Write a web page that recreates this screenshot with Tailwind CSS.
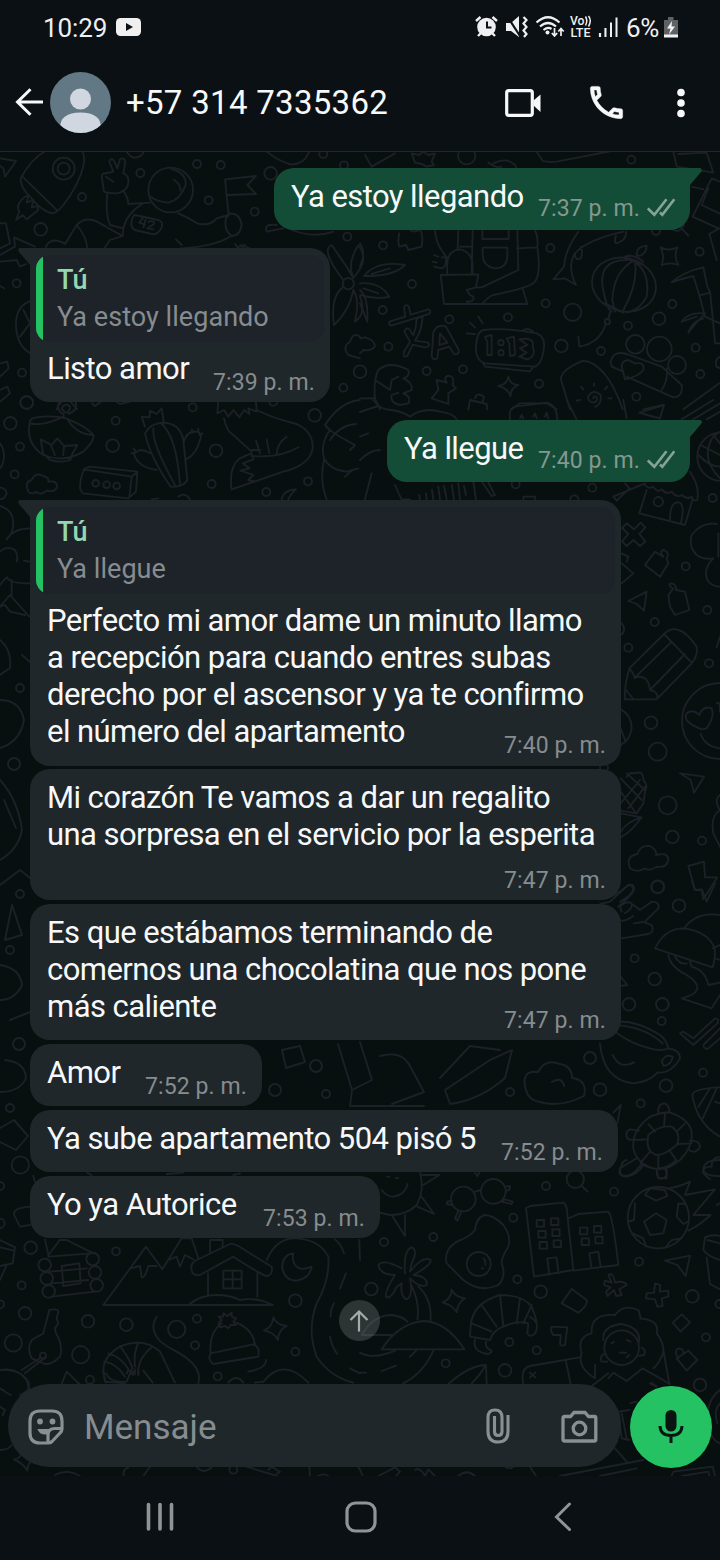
<!DOCTYPE html>
<html lang="es">
<head>
<meta charset="utf-8">
<title>Chat</title>
<script src="https://cdn.jsdelivr.net/npm/@tailwindcss/browser@4"></script>
</head>
<body class="bg-[#0b1014]">
<div class="relative isolate flex h-[1560px] w-[720px] flex-col overflow-hidden bg-[#07100f] font-['Roboto',sans-serif] text-[#f7f8fa]">

<!-- doodle wallpaper -->
<svg class="absolute inset-0 -z-10" width="720" height="1560" viewBox="0 0 720 1560" fill="none" stroke="#1e2028" stroke-width="5.5" stroke-linecap="round" stroke-linejoin="round">
<g transform="translate(0 150) scale(.33333)">
<path d="M0 25L48 33L15 80L10 55L0 48M62 85Q90 30 140 0M62 85Q60 110 90 140Q120 180 155 190Q170 190 190 165Q240 100 252 40Q255 15 245 0M70 82L172 182M75 140Q45 165 58 185L48 210L68 195L80 208L115 180L112 168L95 172L100 150L80 158L85 138Z"/>
<circle cx="191" cy="56" r="33"/><circle cx="191" cy="56" r="18"/>
<path d="M312 125L306 85Q303 68 318 70L340 65L328 35Q332 22 342 32L352 55L360 28Q372 20 376 35L370 70Q388 75 385 100Q380 125 350 130Q325 130 312 125ZM318 80L340 95M322 130Q315 190 330 225L370 235M372 125Q385 145 385 162L450 158M370 235Q380 190 430 160M370 235L368 258L300 220Q260 195 230 225L195 282Q160 260 140 285L135 300M230 225Q260 260 262 295M368 258L330 270L310 300"/>
<circle cx="512" cy="120" r="67"/><path d="M515 57Q560 70 557 105Q540 150 505 158Q470 155 452 140M522 90Q540 100 542 122M535 190Q570 205 590 220Q630 230 650 205L685 195M675 88L768 78L742 105L768 132L682 135M675 88L686 195M690 190Q720 190 725 225Q720 258 695 258Q670 240 678 205ZM690 260Q640 290 540 295M528 268L545 285M405 195L475 210Q490 215 485 232Q475 255 455 252L405 240Q390 232 395 215Q398 195 405 195ZM432 200L418 218L435 224M437 208L430 232M445 215Q465 210 462 222L442 235L460 238M380 5Q400 35 425 15L435 0M800 5Q830 30 870 43Q910 45 925 10L930 0M800 245Q790 220 830 225M800 245L850 235M850 228Q930 270 1000 245"/>
<circle cx="421" cy="69" r="12"/><circle cx="591" cy="42" r="12"/><circle cx="662" cy="45" r="12"/><circle cx="626" cy="151" r="12"/><circle cx="764" cy="185" r="12"/><circle cx="812" cy="70" r="19"/><circle cx="246" cy="141" r="12"/><circle cx="122" cy="238" r="19"/><circle cx="970" cy="12" r="12"/><circle cx="1032" cy="46" r="12"/><circle cx="1042" cy="260" r="12"/><circle cx="50" cy="400" r="12"/><circle cx="66" cy="668" r="12"/><circle cx="1030" cy="713" r="12"/><circle cx="80" cy="757" r="19"/>
<path d="M0 220L18 220L30 280L0 295M0 315L45 290L42 262L105 290M0 335L50 330L60 350L78 342M105 450Q45 460 48 530Q52 590 92 610M70 480L90 520L60 560M0 640L22 635L26 655L0 680M0 720L22 710L30 730L0 755M0 408L12 415M170 778Q180 750 205 748L232 778M700 302L725 285L765 302M705 282L720 300L735 285"/>
<path d="M1030 390Q960 300 995 285L1040 350L1060 384M1060 384Q1040 340 1075 285Q1110 330 1060 384M1030 410Q990 440 1002 525Q1050 480 1060 420M1060 420Q1080 450 1065 515Q1100 490 1080 440"/><circle cx="1045" cy="401" r="17"/>
<path d="M1080 560Q1060 545 1050 575Q1025 590 1045 615L1080 625"/>
</g>
<g transform="translate(360 150) scale(.33333)">
<path d="M15 15L35 50L105 10M155 10L178 15L190 5L205 15L225 10L215 35L222 45L200 50L185 42L165 38ZM385 38Q410 55 425 50M400 40Q440 20 465 45L468 52M530 5L548 32Q560 38 590 35L770 0M950 50L940 5M950 50L1060 68M955 12L1040 8L1060 68M1055 85L1080 95M1055 85L998 200L1075 235M1045 115L1025 165L1078 190M995 110L1030 118M1048 252L1078 235M1048 252L1070 330"/>
<circle cx="320" cy="17" r="26"/><circle cx="814" cy="29" r="12"/>
<path d="M118 250Q112 275 118 290L138 285L145 300L185 290Q190 260 182 240L160 245L150 240M225 240Q225 280 260 322L262 370M295 240L293 300M262 345Q262 300 300 298Q335 305 338 345L338 370M242 375L355 373L348 412L320 420L330 435L340 440Q345 455 320 455L328 462L252 462ZM235 320L222 315M245 322L258 322Q260 350 245 355L222 350M218 335L230 338M338 240L335 370M300 290L335 290M367 240V267H446V240M368 293H442V315Q442 355 405 355Q370 350 368 315ZM472 240L475 360L365 412L345 412M472 295L532 292Q535 260 525 240M532 292Q545 380 520 400Q500 415 400 435Q385 440 368 460M488 415L502 462H328"/>
<path d="M0 350L10 320M0 280Q15 300 5 345M12 378Q50 330 135 345Q100 380 12 378ZM35 372L90 355M0 400Q60 395 88 440Q50 450 0 435M0 420Q25 440 22 515L0 460M10 415L55 430"/>
<path d="M655 245Q615 300 612 350L580 388L615 385L648 405Q620 350 645 310Q680 270 790 245M645 310Q645 335 662 325Q670 305 662 290M770 250Q760 280 770 280Q800 270 798 245"/>
<ellipse cx="792" cy="404" rx="97" ry="80" transform="rotate(15 792 404)"/><path d="M800 330Q720 330 727 405Q740 480 755 485M815 335Q760 370 757 450L765 485M825 335Q835 400 790 480M830 340Q870 370 860 440Q840 480 800 488M795 325L850 345M735 460L790 488M795 320Q820 310 850 335M830 315Q828 290 860 287Q860 310 838 318ZM750 488L745 505M655 560L658 590Q720 580 738 520"/><circle cx="742" cy="515" r="8"/>
<path d="M902 292Q925 305 952 292Q940 318 955 345Q930 335 905 345Q915 320 902 292ZM935 397Q970 365 1030 352L1042 410L1050 425L1058 500L1065 580L1080 580M935 397Q970 385 1000 378L1018 436L1050 428M1018 436L1035 500L1080 520M965 515Q985 485 1035 490Q1010 515 985 548Q995 515 1030 505M965 515L1010 500"/>
<path d="M88 515Q85 525 94 527L208 492Q215 480 205 478L152 494L146 468Q135 462 132 472L136 500ZM170 505L188 500Q185 545 165 572L205 578Q212 590 195 592L158 584L142 618Q128 625 132 605L150 575L133 545Q138 530 148 538L160 556Q170 530 170 505ZM215 620L220 545Q235 520 258 530L296 600Q298 615 282 612L268 590L235 600L232 625Q220 632 215 620ZM238 585L240 550L262 578ZM320 550L345 552M330 518L345 532M355 500L368 520"/>
<path d="M370 540Q440 532 530 550Q555 560 552 590Q548 640 525 650L375 640Q345 630 348 590Q350 545 370 540ZM370 640L375 650L510 664L520 650M488 542Q505 530 522 548M375 560L395 555L395 615L382 615L382 575ZM440 565L462 560L465 615L450 618L448 580ZM478 568Q525 560 518 590Q530 620 500 628L478 620L500 608L480 595L502 585Z"/><circle cx="423" cy="578" r="8"/><circle cx="423" cy="608" r="8"/>
<path d="M415 708Q440 705 445 680Q450 705 475 705Q450 715 452 738Q440 712 415 708ZM230 690L260 698Q250 685 262 678Q285 675 278 705L288 715L265 730L265 762L215 745L235 720ZM45 745Q40 690 55 660Q90 630 145 660Q150 680 130 685Q160 700 155 720L130 730Q155 740 145 760L120 765Q90 760 95 735L115 728M45 690L90 720L95 690L115 680M0 745L45 745L60 778"/>
<path d="M325 778L330 750L380 762L382 778M345 745Q350 725 372 740L368 755M455 778L480 760L560 760L590 778M670 632Q600 660 603 690L630 778M670 632Q740 640 788 778M700 745Q700 735 710 742Q715 755 700 758Q682 755 685 738Q700 715 722 735Q725 765 705 770M702 708V700M735 718L742 710M745 745L755 745M670 718L663 710M660 750L650 752"/>
<circle cx="826" cy="583" r="28"/><circle cx="898" cy="597" r="37"/><circle cx="951" cy="645" r="27"/><path d="M800 612Q760 600 752 635L755 650L790 665M800 612L905 650L965 705Q970 740 940 742L800 680M920 655Q925 690 905 720M795 688L785 650Q785 632 805 630L825 640Q855 635 850 660Q835 680 795 688ZM850 778L910 765M970 778L1078 700"/>
<circle cx="69" cy="286" r="12"/><circle cx="156" cy="402" r="12"/><circle cx="68" cy="480" r="12"/><circle cx="268" cy="508" r="12"/><circle cx="444" cy="502" r="12"/><circle cx="557" cy="460" r="12"/><circle cx="571" cy="294" r="12"/><circle cx="638" cy="487" r="26"/><circle cx="604" cy="588" r="19"/><circle cx="723" cy="603" r="12"/><circle cx="804" cy="527" r="12"/><circle cx="897" cy="506" r="19"/><circle cx="937" cy="462" r="12"/><circle cx="1019" cy="305" r="12"/><circle cx="1007" cy="593" r="12"/><circle cx="1021" cy="672" r="12"/><circle cx="829" cy="740" r="12"/><circle cx="537" cy="701" r="12"/><circle cx="309" cy="658" r="12"/><circle cx="200" cy="663" r="12"/><circle cx="85" cy="590" r="12"/><circle cx="0" cy="665" r="19"/><circle cx="888" cy="243" r="12"/>
<path d="M0 565L15 562Q45 570 45 590Q30 605 10 600L0 610M960 230L985 257M940 240Q960 250 972 225M1080 620Q1062 630 1070 650L1080 655"/>
</g>
<g transform="translate(0 400) scale(.33333)">
<path d="M90 65Q75 130 130 165Q190 190 250 155Q285 120 280 105Q230 105 200 55Q150 45 110 52Q90 55 90 65ZM90 70Q130 80 190 50M205 58Q260 80 280 105M180 0Q165 30 190 42L192 55M225 0Q238 30 205 42M185 25Q195 5 210 20Q210 38 195 38ZM130 165L122 118L155 135L172 115L192 138L232 135L215 165M135 165L150 180Q185 190 210 180L218 165M165 165L152 135M190 165L192 138"/>
<path d="M435 80L425 50L448 52L450 32L470 42L485 25L492 72M435 100Q450 70 490 68Q540 70 550 120L562 240Q550 262 512 260Q450 170 435 100ZM460 85Q455 130 525 255M485 72Q530 110 540 255M470 210Q410 200 402 160L420 150Q435 150 450 160M395 160L405 158M400 145L408 155M550 130Q560 90 590 95Q610 100 600 120Q590 160 560 178M575 88L580 98M595 86V96M608 100L598 105"/>
<path d="M240 265Q240 230 255 205L270 200L412 215L408 275L385 295L248 280ZM250 208L395 230L412 216M395 230L388 293"/><circle cx="287" cy="250" r="10"/><circle cx="320" cy="254" r="10"/><circle cx="350" cy="258" r="10"/>
<path d="M85 275Q72 245 95 240Q105 215 130 228Q148 232 145 245Q170 240 172 260Q165 278 140 272Q120 288 110 275Q95 285 85 275Z"/>
<path d="M275 10L285 18L310 0M340 0L360 12L390 5M655 0L652 40L672 30L685 50L700 30L718 52L732 30L748 42L745 25L770 35L768 5M770 30Q820 55 890 72Q940 95 938 145Q930 195 850 215L695 268Q685 200 720 175Q740 165 755 160M672 55Q680 95 700 105L755 155M755 150L780 150M755 168Q840 175 895 142M768 122L780 160M800 118L808 160M860 110Q830 130 830 165M755 165L760 178L728 190L748 205L722 212L760 225L745 240L765 245M1080 0Q1020 5 975 75Q980 90 1065 135L1050 150M975 75L990 90Q960 130 972 175Q990 210 1040 215L1075 205M972 180Q958 240 980 298M1035 230L1055 212M845 298Q850 270 888 268Q870 285 865 298M0 130Q12 145 12 170Q10 195 0 205M455 298L475 295M535 290Q555 275 570 298M0 262Q18 265 20 280Q15 298 0 298M0 318Q40 330 40 370Q40 400 20 418Q40 385 90 385M0 455Q20 435 45 450Q55 465 50 485M72 482L88 485M0 555Q10 540 22 532Q25 550 90 550M35 540V585M0 620L30 585L88 650M0 620L15 615L30 635L75 645"/>
<circle cx="80" cy="8" r="19"/><circle cx="31" cy="70" r="19"/><circle cx="60" cy="140" r="12"/><circle cx="44" cy="223" r="12"/><circle cx="338" cy="137" r="19"/><circle cx="347" cy="62" r="12"/><circle cx="578" cy="22" r="12"/><circle cx="648" cy="152" r="19"/><circle cx="635" cy="252" r="12"/><circle cx="799" cy="276" r="12"/><circle cx="924" cy="244" r="12"/><circle cx="944" cy="46" r="19"/><circle cx="820" cy="5" r="12"/>
</g>
<g transform="translate(360 400) scale(.33333)">
<path d="M40 0Q60 30 95 30Q130 35 150 50Q190 20 240 35Q280 40 290 58M0 110L25 100M0 180Q30 150 60 150M35 220L15 298M105 255Q115 280 125 298L150 298M180 298L178 285M200 298L198 280M220 298L216 270M240 298L235 260M260 298L252 258M282 298L275 255M300 298L295 250M318 285L312 258M340 245L348 298M368 248L395 288L405 285L385 248M855 250L760 290L770 302L808 265L795 250M450 58Q445 25 465 20L560 8Q590 15 592 58M480 55L485 45L490 55M520 50L525 40L530 55M555 50L560 38L565 55M620 0L650 58M790 0L800 55M838 38L912 15L900 55L872 48ZM965 58L1060 0M1000 58L1080 10M1040 58L1080 35"/>
<circle cx="1085" cy="170" r="73"/><path d="M1080 95Q1050 110 1045 145Q1035 190 1080 235M1015 165Q1050 200 1080 200M1022 135L1080 165M1060 105L1080 130"/>
<path d="M990 215Q1020 260 1012 300Q1000 305 995 290Q980 300 965 285Q950 295 935 275Q920 285 905 268Q890 280 880 260Q868 270 852 252M860 270L838 340L975 375L997 300M930 360Q930 300 960 308Q975 320 962 372"/><circle cx="895" cy="305" r="14"/>
<path d="M800 370L822 388L842 368L856 382L838 402L856 425L840 438L820 420L800 438L786 424L805 402L786 384ZM785 460L805 470L800 485M785 490L820 520L785 550M885 455L910 470Q895 455 912 450Q930 458 920 475L925 490L900 530L855 495ZM925 585L940 565Q925 560 930 550Q950 550 948 570L975 575L988 630L945 645L930 620ZM805 603L860 575L852 632L830 612Z"/>
<path d="M1070 372Q1025 365 995 405Q985 440 1010 465Q1030 480 1060 475Q1025 510 1045 545Q1060 560 1080 560M1075 400V470"/>
<circle cx="697" cy="263" r="12"/><circle cx="1058" cy="294" r="12"/><circle cx="977" cy="499" r="12"/><circle cx="467" cy="253" r="12"/><circle cx="643" cy="298" r="12"/><path d="M490 298V290H525V298"/>
</g>
<g transform="translate(600 600) scale(.33333)">
<path d="M192 102L88 205Q72 260 75 298H170L275 190Q295 165 290 140Q260 95 230 88Q210 85 192 102ZM192 102L275 188M212 128L105 232Q145 222 150 270L255 162M88 205Q98 215 105 235M150 270Q175 275 172 295M78 270L100 297"/>
<circle cx="360" cy="363" r="114"/><path d="M305 388Q245 365 260 340Q280 325 298 345Q310 315 335 325Q345 350 320 385ZM302 402Q315 440 360 445M350 310Q360 300 360 335M62 328Q95 345 95 385Q90 420 62 435M62 385L75 420M80 532Q85 515 105 520Q130 510 130 540Q145 555 135 575L130 610L110 640L62 632M62 535L125 600M62 575L105 635M80 520L135 570M62 610L120 540M85 625L135 560M62 640L125 652Q95 695 62 712M62 695Q80 665 125 652M240 520L312 530L282 578L272 540Z"/>
<path d="M90 805Q75 770 112 762Q120 735 150 738Q172 750 168 765Q205 755 205 780Q200 805 170 800Q145 815 135 805Q110 820 90 805ZM265 798L312 785L315 832L352 832L310 898L305 870H285ZM0 898Q40 895 85 855Q100 855 100 870Q90 890 60 905M360 585Q340 600 360 630Q330 650 340 700L360 740"/>
<circle cx="153" cy="368" r="19"/><circle cx="173" cy="455" r="27"/><circle cx="203" cy="616" r="27"/><circle cx="217" cy="711" r="19"/><circle cx="306" cy="722" r="12"/><circle cx="173" cy="861" r="19"/><circle cx="327" cy="190" r="12"/><circle cx="164" cy="66" r="12"/><circle cx="85" cy="143" r="12"/><circle cx="322" cy="30" r="12"/><path d="M62 68Q74 78 72 90Q70 102 62 104M360 110L350 142"/><circle cx="12" cy="503" r="12"/>
</g>
<g transform="translate(600 880) scale(.33333)">
<path d="M0 72L30 65L85 15Q105 10 102 30Q95 45 55 80M62 120Q70 128 100 108M65 95L60 80Q80 60 95 70Q100 85 75 100M100 75L120 90L155 65Q180 65 175 85L135 125L102 130M135 128L155 135Q165 155 145 162L65 175M275 0L285 30L305 28L320 65L345 10"/>
<path d="M165 205Q195 145 250 145Q330 155 345 210Q345 240 338 262ZM255 142Q290 95 360 105M338 205L360 195M205 225Q210 260 260 285Q300 310 290 330Q285 345 245 355L335 385L360 345M225 230Q240 255 260 250M270 245L275 260Q315 270 325 315L360 308M345 235L360 240M240 460L250 455L280 475L345 415Q360 415 352 430L280 495ZM310 495L360 445M310 495Q312 510 325 505L360 475"/>
<path d="M45 455Q60 430 45 425Q110 420 180 465Q200 480 205 505Q185 515 150 505Q90 490 45 455ZM62 436Q140 445 188 490M0 490Q10 600 100 610Q150 605 172 578Q215 580 240 535Q240 510 205 505M190 555L185 545Q195 520 218 530Q215 555 190 558M38 525Q60 570 102 547"/>
<path d="M40 698L62 675L52 730M175 700Q172 670 195 670Q210 680 208 698M150 710Q190 695 210 698Q265 715 275 755Q280 800 240 840Q200 875 160 865Q110 850 100 805Q95 750 150 710ZM145 765Q180 735 215 740Q245 760 230 795Q195 825 170 825Q135 815 145 765ZM145 732L165 755M195 700L192 740M255 730L230 755M100 780L140 778M235 792L275 790M208 810L228 840M175 828V865M150 815L122 848M105 780L85 778Q70 760 90 748L118 752M270 782Q300 780 300 802Q285 825 265 808M110 835L60 865Q55 890 80 890Q110 885 130 855M170 868L175 895H200V868"/>
<path d="M360 622Q280 625 277 645Q290 730 360 770M330 625L295 680M350 625L308 715M345 665L358 670M360 832Q335 830 335 860Q305 860 310 880L330 898"/>
<circle cx="173" cy="20" r="19"/><circle cx="237" cy="77" r="19"/><circle cx="104" cy="235" r="12"/><circle cx="164" cy="297" r="19"/><circle cx="87" cy="373" r="19"/><circle cx="187" cy="373" r="19"/><circle cx="185" cy="423" r="12"/><circle cx="309" cy="578" r="12"/><circle cx="198" cy="617" r="19"/><circle cx="122" cy="670" r="12"/><circle cx="0" cy="629" r="19"/><path d="M62 290L82 315L62 318"/>
</g>
<g transform="translate(0 1160) scale(.33333)">
<path d="M135 238L145 285L180 240M180 240L200 240L280 280M145 290L275 280M150 335L260 325M155 370L265 360M155 410L285 395M185 318L238 310L242 370L190 378Z"/><circle cx="134" cy="315" r="19"/><circle cx="140" cy="355" r="19"/><circle cx="146" cy="394" r="19"/><circle cx="278" cy="297" r="19"/><circle cx="285" cy="337" r="19"/><circle cx="290" cy="376" r="19"/>
<path d="M310 435H818M310 435L438 260L487 328L545 235M392 325L420 318L425 352Q435 355 445 318L470 318M545 235L575 235L595 295M505 300L530 290L540 320L555 285L580 298M575 328Q570 310 590 300L690 252Q700 250 715 258L815 320Q820 345 800 348Q785 345 700 290L600 345Q575 348 575 328ZM624 340V405M772 340V410M670 332H725V385H670ZM698 332V385M670 358H725M630 240V275M668 240V260M630 240H668M565 435Q600 405 650 405Q690 405 720 420Q770 410 818 435"/>
<path d="M880 280Q845 285 847 325Q855 362 890 362Q930 355 935 320Q900 335 885 315Q875 300 880 280ZM800 300Q830 232 890 235Q960 240 985 290Q990 360 950 430Q920 510 950 590Q990 650 1060 668M1005 238Q1025 255 1032 280M1038 340L1020 385M1002 430Q990 450 992 470M990 530Q995 560 1012 582M1050 625L1080 640M1078 240L1080 300"/>
<path d="M0 240L45 262L38 310L0 318M0 262L42 272M20 315L0 360M148 450Q175 445 175 455L170 475L175 490L165 505L168 520Q190 555 180 590Q155 615 135 612L95 595Q80 565 95 540L130 520L148 450M138 590L75 640M120 595L65 630M0 630Q50 620 80 660L88 690M185 672L200 635L238 672"/><circle cx="129" cy="587" r="9"/>
<path d="M318 668Q290 600 360 560Q430 530 480 575L525 668M318 640Q330 670 380 665L390 640M395 628V642M405 628V642M415 628V642M430 632L458 668M312 605Q350 610 375 650M325 580Q365 590 390 635M360 558Q385 590 398 625M415 548Q400 580 405 620M455 562Q420 590 415 625M470 470Q450 500 470 530Q480 550 530 575Q610 620 595 670"/>
<path d="M632 580Q625 520 665 490M710 488Q760 510 765 555M632 580L760 553Q780 560 775 590L640 612Q622 600 632 580ZM655 490L665 480L655 470L670 470L670 460L682 468L695 458L695 470L708 475L700 485L708 495L692 495L685 505L675 498L662 502Z"/>
<path d="M820 472Q830 495 860 498Q835 510 834 540Q820 515 792 512Q818 500 820 472ZM685 668Q710 640 730 668M745 635Q800 625 798 600M765 668L790 665M790 665Q850 590 925 668M262 38L275 46M500 42L550 38M700 45L720 40M45 170Q30 145 90 140M45 170L60 200L90 195M100 48L105 65"/>
<circle cx="61" cy="15" r="26"/><circle cx="0" cy="78" r="12"/><circle cx="0" cy="190" r="14"/><circle cx="92" cy="263" r="19"/><circle cx="65" cy="376" r="12"/><circle cx="0" cy="433" r="12"/><circle cx="75" cy="460" r="19"/><circle cx="40" cy="549" r="26"/><circle cx="242" cy="584" r="26"/><circle cx="264" cy="484" r="19"/><circle cx="379" cy="494" r="19"/><circle cx="348" cy="274" r="12"/><circle cx="530" cy="508" r="26"/><circle cx="591" cy="476" r="12"/><circle cx="585" cy="556" r="12"/><circle cx="270" cy="659" r="12"/><circle cx="653" cy="649" r="12"/><circle cx="886" cy="422" r="19"/><circle cx="886" cy="575" r="12"/>
</g>
<g transform="translate(360 1160) scale(.33333)">
<path d="M180 38Q195 90 170 135Q140 165 90 165L60 158M65 90Q80 110 100 110Q135 105 143 72M185 45L238 45L190 75M185 110L222 162L172 140M98 170L135 228V165M82 50H88M108 54H114M345 38L352 48L358 38"/>
<circle cx="310" cy="117" r="37"/><circle cx="400" cy="94" r="37"/><path d="M345 95L363 90M436 80L450 78L448 90L438 92M425 125L435 118L458 125L455 132ZM275 122L262 125L260 132L275 135M295 153L285 175L292 182L303 158"/>
<circle cx="646" cy="58" r="26"/><path d="M665 78L683 95"/>
<path d="M375 165Q350 170 345 210Q330 230 290 245Q250 270 260 310Q280 330 310 360Q360 400 415 375Q440 350 425 310Q425 290 445 260Q455 230 430 195Q400 165 375 165Z"/><circle cx="356" cy="312" r="36"/><path d="M370 295Q378 302 376 315M365 325H370"/>
<path d="M522 350L498 145L510 138L610 128Q622 135 622 165L640 330ZM625 175L655 162L745 155Q758 165 775 315L640 332M562 295L590 292L595 340M562 295L568 345M688 280L715 275L722 322M688 280L695 325"/>
<path d="M530 180h22v20h-22zM573 175h22v20h-22zM535 213h22v20h-22zM577 208h22v20h-22zM539 246h22v20h-22zM581 241h22v20h-22zM660 203h22v20h-22zM702 198h22v20h-22zM665 235h22v20h-22zM706 230h22v20h-22z"/>
<circle cx="895" cy="173" r="92"/><path d="M888 160L920 180L910 220L870 225L852 185ZM855 105L870 85L915 90L922 108L888 122ZM955 130L975 132M955 130L950 170L970 192L985 185M825 130L822 180L805 185M818 220L850 235L858 260M918 260L935 240L965 235M925 85Q960 80 990 65L975 105L1065 88L1000 165L1052 165Q1020 195 985 212M778 40Q785 0 800 0M778 40Q800 60 830 30L845 12M845 12Q900 45 950 0M890 35Q890 58 905 55Q920 55 920 38L915 25M1080 0Q1030 0 1030 30Q1035 50 1080 48M1080 130L1070 135"/>
<path d="M135 340Q130 270 155 262Q175 270 155 310L150 335Q190 285 212 300Q215 315 160 345Q205 350 200 375Q180 385 150 355Q160 410 140 418Q120 410 125 370L110 380Q95 415 80 412Q70 400 105 345Q60 345 55 315Q70 295 125 325M155 378Q180 430 172 478M175 380Q215 415 212 480M65 568H313Q260 485 190 483Q115 490 65 568ZM5 525Q40 465 95 465Q130 470 142 485M5 525H95M0 578Q40 600 105 572M150 590L168 572M220 572Q190 640 130 670M65 633L108 617M0 638H18"/>
<path d="M275 388Q285 412 315 415Q292 430 290 457Q278 435 248 428Q275 415 275 388ZM332 500Q335 430 420 405Q490 405 515 440Q540 500 525 520Q510 535 502 520L505 490Q470 480 430 500Q400 510 390 540L330 530L332 500ZM420 405L430 500M365 435L410 500M335 490L395 515M480 415L470 490M515 435L490 490M345 540Q335 575 385 582Q400 575 392 570Q375 565 378 545M510 470Q525 480 530 490"/>
<path d="M575 500L622 502L615 555Q605 560 600 552L602 525L580 525Q570 515 575 500M635 387L680 420Q685 435 655 458L605 430ZM745 345Q760 335 765 368Q790 360 800 375L778 388L785 405L768 408L762 390L742 408L738 395L752 382L732 375L735 362L755 368ZM885 370L900 375L900 395L925 392L925 410L905 415L908 438L892 440L885 418L858 415L860 400L882 398ZM965 463L990 487L962 515L938 488ZM915 302L990 287L977 348L952 315ZM985 572L1012 600L980 632L950 595ZM955 595Q940 575 955 565Q972 565 970 580M1035 232Q1060 222 1080 228M1035 232L1030 270Q1045 290 1080 300M1040 292L1050 372L1080 388M1042 240L1080 250"/>
<path d="M705 655Q650 620 665 580Q650 530 695 520Q690 460 765 465Q790 430 835 450Q845 480 840 475Q900 480 890 520Q920 560 905 590Q890 620 880 625M910 570L928 672M705 615V655M745 655L760 638L800 663L848 625L930 672M680 690L745 640"/><circle cx="785" cy="563" r="52"/><path d="M730 540Q725 500 782 492Q840 500 838 545M735 580Q715 590 725 605L742 605M845 563Q860 570 852 585L838 588M755 550L762 545M800 540L812 545M780 578H798M800 592L808 585"/>
<path d="M265 672Q330 615 378 615L380 672M335 670Q365 640 375 618M490 672Q480 625 510 618L660 592M618 605L632 672M510 638L526 652M526 638L510 652M875 668L890 680"/>
<circle cx="72" cy="246" r="12"/><circle cx="220" cy="231" r="12"/><circle cx="558" cy="78" r="12"/><circle cx="460" cy="173" r="12"/><circle cx="472" cy="358" r="12"/><circle cx="542" cy="395" r="19"/><circle cx="34" cy="387" r="19"/><circle cx="448" cy="546" r="12"/><circle cx="530" cy="571" r="12"/><circle cx="257" cy="610" r="12"/><circle cx="435" cy="631" r="19"/><circle cx="762" cy="95" r="12"/><circle cx="837" cy="305" r="12"/><circle cx="997" cy="409" r="19"/><circle cx="1038" cy="532" r="12"/><circle cx="1020" cy="675" r="19"/><circle cx="1078" cy="432" r="12"/>
</g>
<g transform="translate(0 1370) scale(.33333)">
<path d="M0 0Q60 -5 85 35Q95 60 60 75M0 55L12 62M15 65L32 75M0 110L15 120L8 135M0 240Q25 240 35 225M42 268Q65 265 68 240Q85 260 105 268Q82 275 82 302Q70 280 42 268ZM165 315Q200 295 240 318M372 318Q365 300 385 292M450 290L430 318M590 290Q610 315 635 292M740 290L830 318M805 300L815 290L840 305L830 312M928 290L930 318M1075 290L1080 300M955 318Q970 308 985 318M310 0L315 35L375 40M380 10L385 0M400 15V5M415 15V5"/><circle cx="700" cy="299" r="12"/>
</g>
<g transform="translate(360 1370) scale(.33333)">
<path d="M0 298L8 318M55 318L105 292L120 305L108 318M165 300Q180 290 195 318M195 318L205 298L225 318M295 318Q320 295 345 318M435 290Q450 300 460 290M510 290L528 318M600 318L850 270M720 318L830 295M765 235L800 275M935 318L940 305L1058 290L1065 318M965 318L1045 305L1048 318M775 125L785 205L808 210M775 125L808 120M785 130L800 205M810 100L830 95M870 40L890 50M1080 60Q1040 90 1042 150Q1050 210 1080 220M1080 100Q1060 120 1072 160"/>
</g>
<!-- left margin and the gaps between bubbles -->
<g stroke-width="1.9">
<path d="M0 640Q12 650 10 668L0 675M22 655L30 662M0 700Q20 700 24 720Q20 742 0 748M0 780Q18 800 22 830Q18 850 0 860M4 800L16 828M0 885L20 870L30 878M12 905L22 935L5 940ZM0 965Q20 968 22 985Q15 1000 0 1000M10 1020L30 1012M5 1060Q25 1062 26 1078Q20 1092 0 1092M0 1128L14 1120L28 1136L16 1150L0 1142"/>
<circle cx="20" cy="688" r="4"/><circle cx="14" cy="764" r="6"/><circle cx="20" cy="894" r="4"/><circle cx="10" cy="950" r="4"/><circle cx="19" cy="1044" r="6"/><circle cx="10" cy="1108" r="4"/>
<path d="M282 1050L300 1046L305 1062L286 1068ZM338 1044L352 1090L372 1080L360 1042M380 1056Q402 1050 410 1066L424 1092L392 1104M352 1090L350 1106L424 1106M440 1078L470 1046L500 1050M445 1090L490 1060L512 1050L505 1078Q480 1100 450 1104ZM526 1090Q520 1070 538 1072Q545 1058 560 1064Q572 1066 572 1078Q588 1080 584 1096Q560 1108 540 1102Q528 1100 526 1090ZM552 1082Q562 1076 564 1086"/>
<circle cx="275" cy="1090" r="6"/><circle cx="316" cy="1066" r="6"/><circle cx="326" cy="1094" r="4"/><circle cx="510" cy="1092" r="4"/><circle cx="590" cy="1058" r="6"/>
<path d="M360 412L378 406M330 440Q340 425 356 424"/>
</g>
</svg>

<!-- status bar -->
<div class="flex h-[54px] shrink-0 items-center bg-[#0b1014] pl-[43px] text-[#eeeff0]">
  <span class="w-[73px] pt-[2px] text-[26px] leading-[54px] tracking-[-0.1px]">10:29</span>
  <svg width="25" height="18" viewBox="0 0 25 18"><rect width="25" height="18" rx="4.5" fill="#f0f0f0"/><path d="M10 5L17 9L10 13Z" fill="#0b1014"/></svg>
  <svg class="ml-[333px]" width="132" height="26" viewBox="474 14 132 26" fill="none" stroke="#eeeff0" stroke-width="2">
    <circle cx="486.500" cy="27" r="9.300" fill="#eeeff0" stroke="none"/><path d="M487 21.500V27.500H491.500" stroke="#0b1014"/><path d="M476 21L480.500 17M497 21L492.500 17M478 36L481 33M495 36L492 33" stroke-width="2.400"/>
    <path d="M506 23H511L519 16V37L511 31H506Z" fill="#eeeff0" stroke="none"/><path d="M507 16L520 36" stroke="#0b1014" stroke-width="2.200"/><path d="M523.500 17L526.500 20L523.500 23.500L526.500 27L523.500 30.500L526.500 34L524 37" stroke-width="2.200"/>
    <path d="M536.500 22.500Q548 12 559.500 22.500M540 26.500Q548 19.500 556 26.500M543.500 30Q548 26.500 551.500 29" stroke-width="2.200"/><circle cx="547.500" cy="32.500" r="2" fill="#eeeff0" stroke="none"/><path d="M554.500 28V36M551.800 33L554.500 36L557.200 33M561 36V28.500M558.300 31.500L561 28.500L563.700 31.500" stroke-width="1.700"/>
    <g fill="#eeeff0" stroke="none" font-family="Roboto" font-weight="500"><text x="570" y="25" font-size="12.500" textLength="14.500" lengthAdjust="spacingAndGlyphs">Vo</text><text x="570.500" y="37" font-size="12.500" textLength="20" lengthAdjust="spacingAndGlyphs">LTE</text></g><path d="M585.500 16.500Q588 20.500 585.500 25.500M588.500 16Q592 20.500 588.500 26.500" stroke-width="1.500"/>
    <path d="M600 33V37M605.500 28V37" stroke-width="2.200"/>
  </svg>
  <svg width="14" height="26" viewBox="606 14 14 26" stroke="#eeeff0" stroke-width="2"><path d="M605.500 28V37M611 22.500V37M616.500 17.500V37"/></svg>
  <span class="ml-[6px] w-[37px] pt-[2px] text-[26px] leading-[54px] tracking-[-0.3px]">6%</span>
  <svg class="-mt-[1px]" width="16" height="24" viewBox="0 0 16 24"><path d="M5 2H10.500V5H15V22H1V5H5Z" fill="#5e6264"/><path d="M1 19.500H15V22.500H1Z" fill="#f2f2f2"/><path d="M9 6L4 13.500H7.500L6 19.500L12 11.500H8.500Z" fill="#f4f4f4"/></svg>
</div>

<!-- chat header -->
<header class="flex h-[98px] shrink-0 items-center border-b border-[#20262b] bg-[#0b1014] pb-[1px] pl-[15px]">
  <svg width="29" height="28" viewBox="0 0 29 28" fill="none" stroke="#f7f8fa" stroke-width="3"><path d="M28 14H2.500M15.500 1.200L2.500 14L15.500 26.800"/></svg>
  <svg class="ml-[6px]" width="61" height="61" viewBox="0 0 61 61"><clipPath id="av"><circle cx="30.500" cy="30.500" r="30.500"/></clipPath><g clip-path="url(#av)"><rect width="61" height="61" fill="#627884"/><circle cx="30.500" cy="27" r="10.500" fill="#d0d7e1"/><path d="M10 56Q10 40.500 30.500 40.500Q51 40.500 51 56L40 62H20Z" fill="#d0d7e1"/></g></svg>
  <h1 class="ml-[15px] w-[379px] whitespace-nowrap pt-[2px] text-[33px] leading-[40px] tracking-[0.3px]">+57 314 7335362</h1>
  <svg class="mt-[1px]" width="37" height="30" viewBox="0 0 37 30"><rect x="1.700" y="2.700" width="25.600" height="24.600" rx="2" fill="none" stroke="#f7f8fa" stroke-width="3.200"/><path d="M28.500 12.500L35.500 6.500V24L28.500 17.500Z" fill="#f7f8fa"/></svg>
  <svg class="ml-[43px] mt-[1px]" width="43" height="43" viewBox="0 0 24 24" fill="#f7f8fa" stroke="#f7f8fa" stroke-width=".25"><path d="M6.540 5c.060.890.210 1.760.450 2.590l-1.200 1.200c-.410-1.200-.670-2.470-.760-3.790h1.510m9.860 12.020c.850.240 1.720.390 2.600.450v1.490c-1.320-.090-2.590-.350-3.800-.750l1.200-1.190M7.500 3H4c-.550 0-1 .450-1 1 0 9.390 7.610 17 17 17 .550 0 1-.450 1-1v-3.490c0-.550-.450-1-1-1-1.240 0-2.450-.200-3.570-.570-.100-.040-.210-.050-.310-.050-.260 0-.510.100-.710.290l-2.200 2.200c-2.830-1.450-5.150-3.760-6.590-6.590l2.200-2.200c.280-.280.360-.670.250-1.020C8.700 6.450 8.500 5.250 8.500 4c0-.550-.450-1-1-1z"/></svg>
  <svg class="ml-[48px] mt-[1px]" width="10" height="30" viewBox="0 0 10 30" fill="#f7f8fa"><circle cx="5" cy="4.500" r="3.800"/><circle cx="5" cy="15" r="3.800"/><circle cx="5" cy="25.500" r="3.800"/></svg>
</header>

<!-- messages -->
<main class="flex h-[1232px] shrink-0 flex-col items-start pl-[30px] pr-[30px] pt-4 text-[31px] leading-[37px] tracking-[-0.56px]">
  <div class="relative flex h-[62px] w-[416px] items-start self-end rounded-[20px] rounded-tr-none bg-[#144d37] pl-[17px] pt-[10px]">
    <svg class="absolute -right-3 top-0" width="13" height="19" viewBox="0 0 13 19"><path d="M0 0H11Q14 1 12 4L1 17V19H0Z" fill="#144d37"/></svg>
    <p class="w-[247px] whitespace-nowrap">Ya estoy llegando</p>
    <time class="mt-[17px] w-[109px] whitespace-nowrap text-[23px] leading-[28px] tracking-[0.1px] text-[#85988f]">7:37 p. m.</time>
    <svg class="mt-[20px]" width="28" height="19" viewBox="0 0 28 19" fill="none" stroke="#85a496" stroke-width="2.600"><path d="M.800 10.500L7.300 16.800L19.500 1.200M13 14.500L15.300 16.800L27.300 1.200"/></svg>
  </div>
  <div class="relative mt-[18px] flex h-[154px] w-[300px] flex-col rounded-[20px] rounded-tl-none bg-[#1f272a] px-[6px] pt-[7px]">
    <svg class="absolute -left-3 top-0" width="13" height="19" viewBox="0 0 13 19"><path d="M13 0H2Q-1 1 1 4L12 17V19H13Z" fill="#1f272a"/></svg>
    <div class="flex h-[87px] overflow-hidden rounded-[14px] bg-[#1d2329] text-[27px] tracking-[0.05px]">
      <div class="w-[7px] bg-[#25c263]"></div>
      <div class="pl-[14px] pt-[7px]"><p class="font-medium text-[#93d7af]">Tú</p><p class="whitespace-nowrap text-[#868c90]">Ya estoy llegando</p></div>
    </div>
    <div class="flex justify-between pl-[11px] pr-[9px] pt-[8px]"><p class="whitespace-nowrap">Listo amor</p><time class="mt-[19px] whitespace-nowrap text-[23px] leading-[28px] tracking-[0.1px] text-[#868c8f]">7:39 p. m.</time></div>
  </div>
  <div class="relative mt-[18px] flex h-[62px] w-[303px] items-start self-end rounded-[20px] rounded-tr-none bg-[#144d37] pl-[17px] pt-[10px]">
    <svg class="absolute -right-3 top-0" width="13" height="19" viewBox="0 0 13 19"><path d="M0 0H11Q14 1 12 4L1 17V19H0Z" fill="#144d37"/></svg>
    <p class="w-[134px] whitespace-nowrap">Ya llegue</p>
    <time class="mt-[17px] w-[109px] whitespace-nowrap text-[23px] leading-[28px] tracking-[0.1px] text-[#85988f]">7:40 p. m.</time>
    <svg class="mt-[20px]" width="28" height="19" viewBox="0 0 28 19" fill="none" stroke="#85a496" stroke-width="2.600"><path d="M.800 10.500L7.300 16.800L19.500 1.200M13 14.500L15.300 16.800L27.300 1.200"/></svg>
  </div>
  <div class="relative mt-[18px] flex h-[266px] w-[591px] flex-col rounded-[20px] rounded-tl-none bg-[#1f272a] px-[6px] pt-[7px]">
    <svg class="absolute -left-3 top-0" width="13" height="19" viewBox="0 0 13 19"><path d="M13 0H2Q-1 1 1 4L12 17V19H13Z" fill="#1f272a"/></svg>
    <div class="flex h-[87px] shrink-0 overflow-hidden rounded-[14px] bg-[#1d2329] text-[27px] tracking-[0.05px]">
      <div class="w-[7px] bg-[#25c263]"></div>
      <div class="pl-[14px] pt-[7px]"><p class="font-medium text-[#93d7af]">Tú</p><p class="whitespace-nowrap text-[#868c90]">Ya llegue</p></div>
    </div>
    <p class="whitespace-nowrap pl-[11px] pt-[8px]">Perfecto mi amor dame un minuto llamo<br>a recepción para cuando entres subas<br>derecho por el ascensor y ya te confirmo<br>el número del apartamento</p>
    <time class="-mt-[18px] self-end pr-[9px] text-[23px] leading-[28px] tracking-[0.1px] text-[#868c8f]">7:40 p. m.</time>
  </div>
  <div class="mt-[3px] flex h-[131px] w-[591px] flex-col rounded-[20px] bg-[#1f272a] pl-[17px] pr-[15px] pt-[10px]">
    <p class="whitespace-nowrap">Mi corazón Te vamos a dar un regalito<br>una sorpresa en el servicio por la esperita</p>
    <time class="mt-[14px] self-end text-[23px] leading-[28px] tracking-[0.1px] text-[#868c8f]">7:47 p. m.</time>
  </div>
  <div class="mt-[4px] flex h-[136px] w-[591px] flex-col rounded-[20px] bg-[#1f272a] pl-[17px] pr-[15px] pt-[10px]">
    <p class="whitespace-nowrap">Es que estábamos terminando de<br>comernos una chocolatina que nos pone<br>más caliente</p>
    <time class="-mt-[18px] self-end text-[23px] leading-[28px] tracking-[0.1px] text-[#868c8f]">7:47 p. m.</time>
  </div>
  <div class="mt-[4px] flex h-[62px] w-[232px] justify-between rounded-[20px] bg-[#1f272a] pl-[17px] pr-[15px] pt-[10px]"><p>Amor</p><time class="mt-[19px] whitespace-nowrap text-[23px] leading-[28px] tracking-[0.1px] text-[#868c8f]">7:52 p. m.</time></div>
  <div class="mt-[4px] flex h-[62px] w-[588px] justify-between rounded-[20px] bg-[#1f272a] pl-[17px] pr-[15px] pt-[10px]"><p>Ya sube apartamento 504 pisó 5</p><time class="mt-[19px] whitespace-nowrap text-[23px] leading-[28px] tracking-[0.1px] text-[#868c8f]">7:52 p. m.</time></div>
  <div class="mt-[4px] flex h-[62px] w-[350px] justify-between rounded-[20px] bg-[#1f272a] pl-[17px] pr-[15px] pt-[10px]"><p>Yo ya Autorice</p><time class="mt-[19px] whitespace-nowrap text-[23px] leading-[28px] tracking-[0.1px] text-[#868c8f]">7:53 p. m.</time></div>
  <div class="mt-[62px] flex h-[41px] w-[658px] justify-center"><div class="flex size-[41px] items-center justify-center rounded-full bg-[#9ca3a0]/25">
    <svg width="20" height="24" viewBox="0 0 20 24" fill="none" stroke="#a6abab" stroke-width="2.200"><path d="M10 22.500V2.500M1.500 11L10 2.500L18.500 11"/></svg></div></div>
</main>

<!-- composer -->
<footer class="flex h-[92px] shrink-0 items-start pl-2">
  <div class="flex h-[83px] w-[613px] items-center rounded-full bg-[#1f272a] pl-5 text-[#868d91]">
    <svg class="mt-[2px]" width="36" height="36" viewBox="0 0 36 36" fill="none" stroke="#899094" stroke-width="3.200"><path d="M12 2H24Q34 2 34 12V20Q34 22 32 24L24 32.500Q22.500 34 20 34H12Q2 34 2 24V12Q2 2 12 2Z"/><path d="M33 19.500H27Q20 19.500 20 26V34"/><circle cx="12" cy="12.500" r="2.900" fill="#899094" stroke="none"/><circle cx="24.500" cy="12.500" r="2.900" fill="#899094" stroke="none"/><path d="M9.500 20H23Q19 22 19 25.500Q11 26 9.500 20Z" fill="#899094" stroke="none"/></svg>
    <span class="ml-[20px] w-[402px] pt-[4px] text-[35px] leading-[40px]">Mensaje</span>
    <svg width="24" height="36" viewBox="0 0 24 36" fill="none" stroke="#899094" stroke-width="3.100"><path d="M22 7V23.500Q22 34 12 34Q2 34 2 23.500V9.500Q2 2 9 2Q16 2 16 9.500V23.500Q16 27.500 12.200 27.500Q8.500 27.500 8.500 23.500V8"/></svg>
    <svg class="ml-[51px] mt-[2px]" width="37" height="34" viewBox="0 0 37 34" fill="none" stroke="#899094" stroke-width="3.300"><path d="M3.500 6.500H9.500L13 2.500H24L27.500 6.500H33.500Q34.800 6.500 34.800 8V29.500Q34.800 31 33.500 31H3.500Q2 31 2 29.500V8Q2 6.500 3.500 6.500Z"/><circle cx="18.500" cy="18.500" r="6.300"/></svg>
  </div>
  <div class="ml-[9px] mt-[2px] flex size-[82px] items-center justify-center rounded-full bg-[#25c263]">
    <svg class="-mt-[1px]" width="26" height="36" viewBox="0 0 26 36" fill="none" stroke="#0a1512" stroke-width="3"><rect x="7.500" y="1" width="11" height="21.500" rx="5.500" fill="#0a1512" stroke="none"/><path d="M2 17Q2.500 26.500 13 26.500Q23.500 26.500 24 17M13 26.500V34"/></svg>
  </div>
</footer>

<!-- system navigation -->
<nav class="flex h-[84px] shrink-0 items-center bg-[#0b1014] pl-[146px]">
  <svg class="-mt-[2px]" width="28" height="30" viewBox="0 0 28 30" stroke="#909496" stroke-width="3.600" stroke-linecap="round"><path d="M2.500 2.500V27M14 2.500V27M25.500 2.500V27"/></svg>
  <svg class="-mt-[2px] ml-[171px]" width="32" height="32" viewBox="0 0 32 32" fill="none" stroke="#909496" stroke-width="3.200"><rect x="2" y="2" width="28" height="28" rx="8.500"/></svg>
  <svg class="-mt-[2px] ml-[177px]" width="18" height="30" viewBox="0 0 18 30" fill="none" stroke="#909496" stroke-width="3" stroke-linecap="round"><path d="M15.500 2L2.500 15L15.500 27.500"/></svg>
</nav>
</div>
</body>
</html>
